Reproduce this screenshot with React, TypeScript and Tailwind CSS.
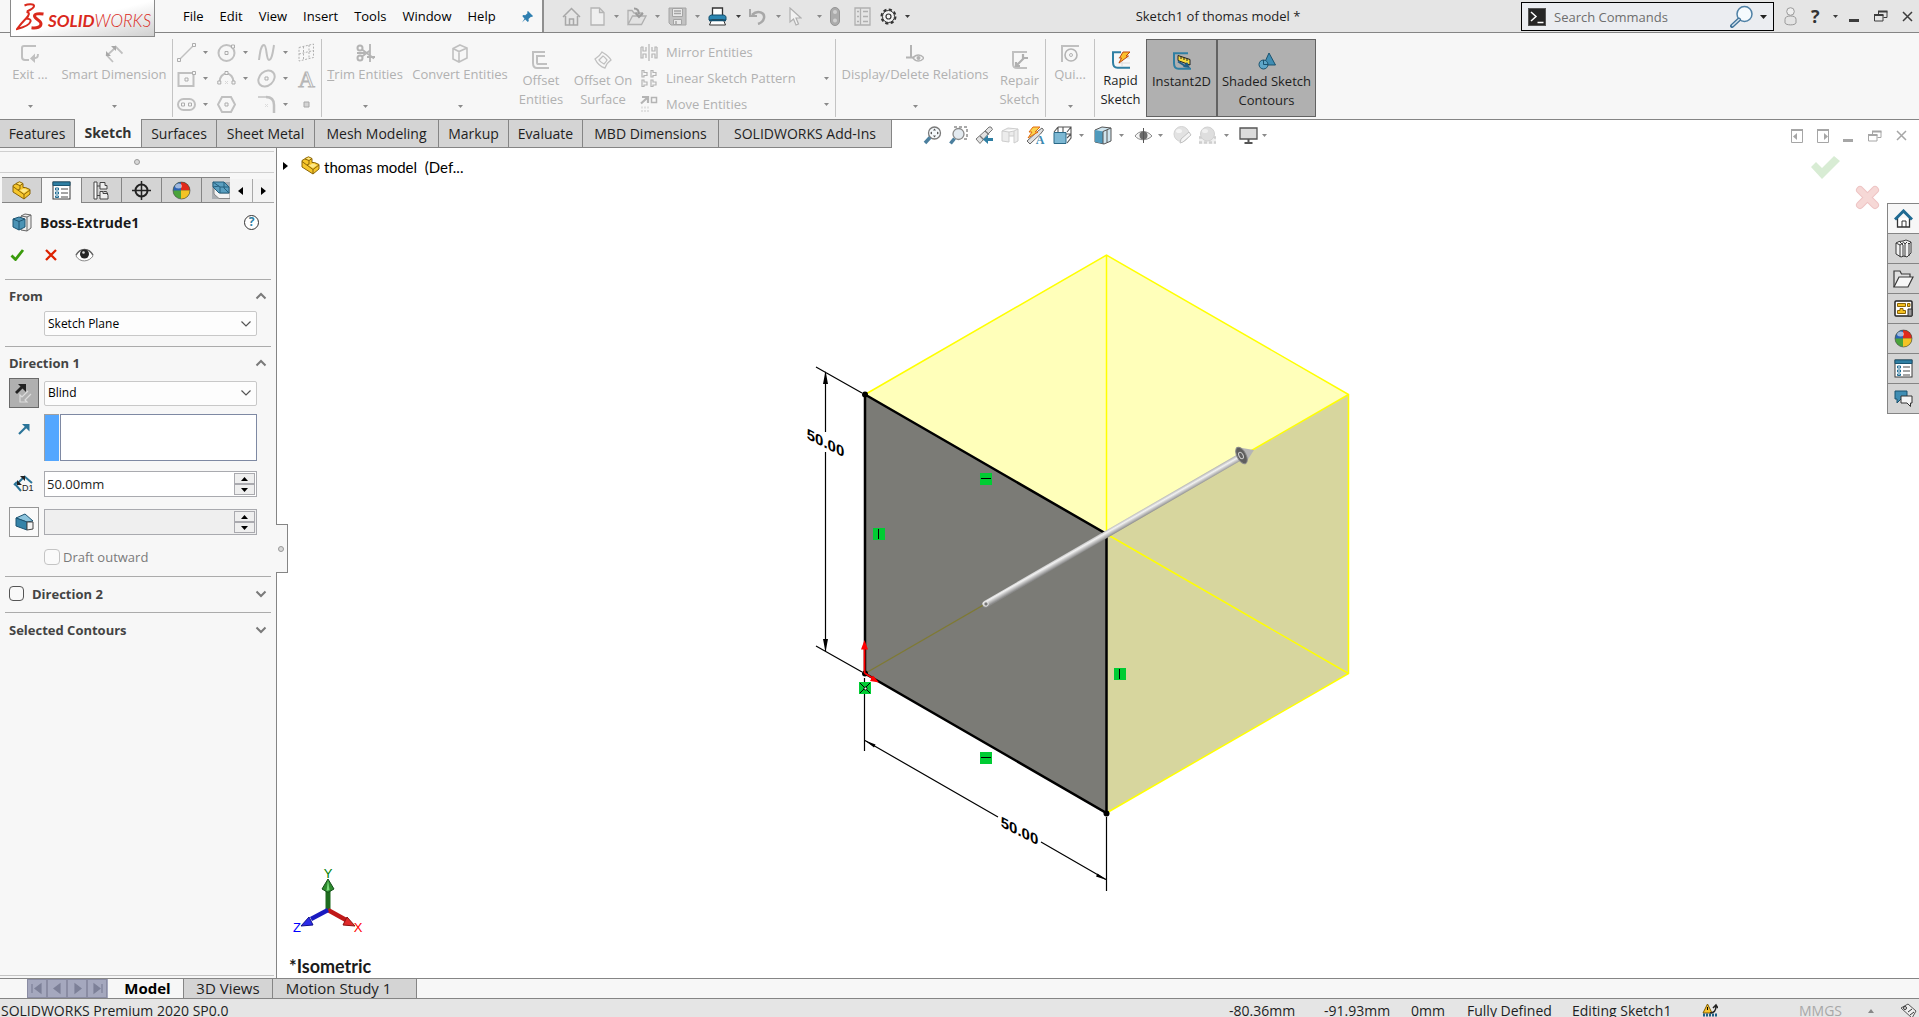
import { useState } from "react";
import type { ReactNode } from "react";

type IconProps = { w?: number; h?: number; className?: string; children: ReactNode };

const Svg = ({ w = 18, h = 18, className = "", children }: IconProps) => (
  <svg
    width={w}
    height={h}
    viewBox={`0 0 ${w} ${h}`}
    fill="none"
    className={`shrink-0 ${className}`}
    aria-hidden="true"
  >
    {children}
  </svg>
);

const Caret = ({ className = "text-[#8a8a8a]" }: { className?: string }) => (
  <Svg w={5} h={3} className={className}>
    <path d="M0 0h5L2.500 3z" fill="currentColor" />
  </Svg>
);

const Chevron = ({ up = false }: { up?: boolean }) => (
  <Svg w={12} h={8}>
    <path
      d={up ? "M1.500 6.500 6 2l4.500 4.500" : "M1.500 1.500 6 6l4.500-4.500"}
      stroke="#7a7a7a"
      strokeWidth="2"
    />
  </Svg>
);

/* ---------- Shared icons ---------- */

const PartIcon = () => (
  <Svg w={19} h={19}>
    <path
      d="M1 4.500 4 2.800V2.500L7.500.8 11 2.500v4l2.500 0 4.500 2v4.500L12 18 1 11z"
      fill="#f6c62b"
      stroke="#8a6508"
    />
    <path d="M1 5.500 12 13.500V18M12 13.500l6-4.500M4 3l4 1.500V8l-2 1M8 4.500l3-2" stroke="#8a6508" />
    <path d="m5 2.500 2.500-1L10 2.500 8 3.800zM8 9.500l3.500-2 4.500 1.500-4 3z" fill="#fde88a" />
  </Svg>
);

const PropertyIcon = () => (
  <Svg w={19} h={19}>
    <rect x="1" y="1" width="17" height="17" fill="#fff" stroke="#3a3a3a" />
    <path d="M1 1h17v3.500H1z" fill="#2f7fa3" stroke="#1c5672" />
    <path d="M3.500 7h3v2h-3zM3.500 11h3v2h-3zM3.500 15h3v1.500h-3z" fill="#fff" stroke="#1f6d94" />
    <path d="M9 8h7M9 12h7M9 16h7" stroke="#4a4a4a" />
  </Svg>
);

const AppearanceBall = () => (
  <Svg w={19} h={19}>
    <circle cx="9.500" cy="9.500" r="8.500" fill="#4aa33a" />
    <path d="M9 9.500V1a8.500 8.500 0 0 1 9 8.500z" fill="#e0291b" />
    <path d="M9 9.500V1a8.500 8.500 0 0 0-8 8.500z" fill="#2c63b5" />
    <path d="M9 9.500h9a8.500 8.500 0 0 1-9 8.500z" fill="#f4c324" />
    <ellipse cx="6.500" cy="5" rx="3.500" ry="2.500" fill="#fff" opacity=".55" />
    <circle cx="9.500" cy="9.500" r="8.500" stroke="#444" strokeOpacity=".6" />
  </Svg>
);

const RestoreIcon = ({ className = "text-[#3c3c3c]" }: { className?: string }) => (
  <Svg w={14} h={12} className={className}>
    <path d="M4.500 4V1.500h8.500v6H9.500M.500 5h8.500v6H.500z" stroke="currentColor" />
    <path d="M4 1.500h9.500M0 5h9.500" stroke="currentColor" strokeWidth="2" />
  </Svg>
);

const CloseIcon = ({ className = "text-[#3c3c3c]" }: { className?: string }) => (
  <Svg w={11} h={11} className={className}>
    <path d="m1 1 9 9M10 1l-9 9" stroke="currentColor" strokeWidth="1.500" />
  </Svg>
);

const MinimizeIcon = ({ className = "text-[#3c3c3c]" }: { className?: string }) => (
  <Svg w={11} h={12} className={className}>
    <path d="M0 9h10v3H0z" fill="currentColor" />
  </Svg>
);

/* ---------- Title bar ---------- */

const menus = ["File", "Edit", "View", "Insert", "Tools", "Window", "Help"];

const Logo = () => (
  <div className="z-10 ml-[10px] flex h-[37px] w-[145px] shrink-0 items-center self-start border border-t-0 border-[#8a8a8a] bg-linear-to-br from-white via-white to-[#d0d0d0] pb-[3px] pl-[5px] text-[#da291c]">
    <Svg w={28} h={28}>
      <path
        d="M8.500 2.500c3-1.200 9-2 9.500.2.500 2-3.500 4.200-7 5.800M10.500 9c3.500.5 3 3-.5 6.500C7 18.500 4 22 1 26c6-1.500 12.500-4 13.500-7.500.6-2-1.500-3-4.500-3"
        stroke="currentColor"
        strokeWidth="2"
      />
      <path
        d="M27.500 11c-5-.8-9-.2-9 2 0 2.800 6.500 4.300 6.500 7.800 0 3.200-4 4.700-9.500 4"
        stroke="currentColor"
        strokeWidth="3"
      />
    </Svg>
    <span className="mt-2 ml-[4px] text-[17px] leading-5 italic [font-family:Lato,sans-serif]">
      <b className="font-bold">SOLID</b>
      <span className="font-light">WORKS</span>
    </span>
  </div>
);

const quickTools: { label: string; cell: string; caret?: string; icon: ReactNode }[] = [
  {
    label: "Home",
    cell: "w-[28px]",
    icon: (
      <Svg w={19} h={19}>
        <path d="M3.500 9v9h12V9M1 10l8.500-8.500L18 10M7.500 18v-6h4v6" stroke="#a8a8a8" strokeWidth="1.500" />
      </Svg>
    ),
  },
  {
    label: "New",
    cell: "w-[37px]",
    caret: "text-[#8a8a8a]",
    icon: (
      <Svg w={15} h={19}>
        <path d="M1 1h8.500L14 5.500V18H1zM9.500 1v4.500H14" fill="#efefef" stroke="#b4b4b4" strokeWidth="1.300" />
      </Svg>
    ),
  },
  {
    label: "Open",
    cell: "w-[41px]",
    caret: "text-[#8a8a8a]",
    icon: (
      <Svg w={20} h={19}>
        <path d="M1 17V3.500h4L7 6h8v3M1 17.500 5.500 9H19l-4.500 8.500z" fill="#e2e2e2" stroke="#b0b0b0" strokeWidth="1.300" />
        <path d="M7 1.500c3 0 5 2 5 6M8.500 6l3.500 4 4-4" stroke="#9c9c9c" strokeWidth="2" />
      </Svg>
    ),
  },
  {
    label: "Save",
    cell: "w-[40px]",
    caret: "text-[#8a8a8a]",
    icon: (
      <Svg w={19} h={19}>
        <path d="M1 1h17v17H3l-2-2z" fill="#c2c2c2" stroke="#a4a4a4" />
        <path d="M4.500 1.500h10v8h-10zM5.500 12.500h8v5h-8z" fill="#e8e8e8" stroke="#a4a4a4" />
        <path d="M6 4h7M6 6.500h7M8 14v3" stroke="#a4a4a4" strokeWidth="1.500" />
      </Svg>
    ),
  },
  {
    label: "Print",
    cell: "w-[41px]",
    caret: "text-[#3c3c3c]",
    icon: (
      <Svg w={19} h={19}>
        <path d="M4.500 9V1h10v8" fill="#fff" stroke="#333" strokeWidth="1.300" />
        <path d="M1 13V9.500L3 8h13l2 1.500V13z" fill="#2b86b2" stroke="#14506e" />
        <path d="M3.500 13h12l2 5h-16z" fill="#fff" stroke="#333" />
        <path d="M1 13.500h17" stroke="#14506e" strokeWidth="1.500" />
      </Svg>
    ),
  },
  {
    label: "Undo",
    cell: "w-[40px]",
    caret: "text-[#8a8a8a]",
    icon: (
      <Svg w={17} h={17}>
        <path d="M1 1v7h7" stroke="#a8a8a8" strokeWidth="2" />
        <path d="M3 7c6-6 13-2 12 3-.5 3-3 5-6 6" stroke="#a8a8a8" strokeWidth="2.500" />
      </Svg>
    ),
  },
  {
    label: "Select",
    cell: "w-[41px]",
    caret: "text-[#8a8a8a]",
    icon: (
      <Svg w={13} h={19}>
        <path d="M1 1v14l3.500-3 2.500 6 2.500-1L7 11h5z" fill="#f2f2f2" stroke="#b0b0b0" strokeWidth="1.200" />
      </Svg>
    ),
  },
  {
    label: "Rebuild",
    cell: "w-[24px]",
    icon: (
      <Svg w={10} h={19}>
        <rect x=".5" y=".5" width="9" height="18" rx="4.500" fill="#ababab" stroke="#959595" />
        <circle cx="5" cy="5" r="2" fill="#d0d0d0" />
        <circle cx="5" cy="13.500" r="2" fill="#d0d0d0" />
      </Svg>
    ),
  },
  {
    label: "File Properties",
    cell: "w-[26px]",
    icon: (
      <Svg w={17} h={19}>
        <path d="M1 1h15v17H1zM6.500 1v17M3 4.500h2M3 9.500h2M3 14.500h2M9 4.500h5M9 9.500h5M9 14.500h5" stroke="#b0b0b0" strokeWidth="1.300" />
      </Svg>
    ),
  },
  {
    label: "Options",
    cell: "w-[38px]",
    caret: "text-[#3c3c3c]",
    icon: (
      <Svg w={17} h={17}>
        <circle cx="8.500" cy="8.500" r="7" stroke="#333" strokeWidth="2" strokeDasharray="3.200 2.300" />
        <circle cx="8.500" cy="8.500" r="6" fill="#f2f2f2" stroke="#333" />
        <circle cx="8.500" cy="8.500" r="2.500" stroke="#333" strokeWidth="1.200" />
      </Svg>
    ),
  },
];

const TitleBar = () => (
  <header className="flex h-[33px] shrink-0 border-b border-[#858585] bg-[#e5e5e5]">
    <div className="flex h-8 w-[544px] shrink-0 items-center border-r-2 border-[#8f8f8f] bg-[#f7f7f7]">
      <Logo />
      <nav className="ml-[28px] flex gap-4">
        {menus.map((menu) => (
          <button key={menu} className="text-[13px] leading-6 text-black">
            {menu}
          </button>
        ))}
      </nav>
      <button aria-label="Pin menu" className="mr-2 ml-auto">
        <Svg w={13} h={13}>
          <path d="m7 1 5 5-1 1-1-.3L7.500 9l.3 2-1 1-2.600-2.600L1 12.500 3.500 8.700 1.300 6l1-1 2 .3L6.700 3 6 2z" fill="#2f7fb0" />
        </Svg>
      </button>
    </div>

    <div className="ml-[18px] flex h-8 items-center">
      {quickTools.map((tool) => (
        <button
          key={tool.label}
          aria-label={tool.label}
          className={`flex shrink-0 items-center justify-between pt-px pr-[8px] ${tool.cell}`}
        >
          {tool.icon}
          {tool.caret && <Caret className={tool.caret} />}
        </button>
      ))}
    </div>

    <h1 className="flex-1 pr-[3px] text-center text-[13px] leading-8 text-[#1e1e1e]">
      Sketch1 of thomas model *
    </h1>

    <div className="mt-[2px] flex h-[29px] w-[253px] shrink-0 items-center border border-black bg-[#ebedf1] pr-[6px] pl-[6px]">
      <Svg w={18} h={18}>
        <rect x=".5" y=".5" width="17" height="17" fill="#262626" stroke="#555" />
        <path d="m3 4 5 4.500L3 13M9.500 14.500h6" stroke="#fff" strokeWidth="1.500" />
      </Svg>
      <input
        aria-label="Search Commands"
        placeholder="Search Commands"
        className="ml-2 w-full min-w-0 bg-transparent text-[13px] leading-5 outline-none placeholder:text-[#6e6e6e]"
      />
      <button aria-label="Run search" className="flex items-center gap-[6px]">
        <Svg w={24} h={23}>
          <circle cx="14.500" cy="9" r="7.500" fill="#f5fafd" stroke="#4f81a6" strokeWidth="1.500" />
          <path d="m9 14.500-7 6.500" stroke="#3f729a" strokeWidth="4" strokeLinecap="round" />
          <path d="m9 14.500-6.500 6" stroke="#cfe0ec" strokeWidth="1.500" strokeLinecap="round" />
        </Svg>
        <Svg w={7} h={4}>
          <path d="M0 0h7L3.500 4z" fill="#222" />
        </Svg>
      </button>
    </div>

    <div className="flex h-8 w-[145px] shrink-0 items-center pr-[6px] pl-[10px]">
      <button aria-label="Login">
        <Svg w={13} h={19}>
          <circle cx="6.500" cy="4.500" r="3.800" fill="#eee" stroke="#999" />
          <path d="M1 16v-3.500C1 10 3 9 6.500 9s5.500 1 5.500 3.500V16c-1 2.500-10 2.500-11 0z" fill="#e4e4e4" stroke="#999" />
        </Svg>
      </button>
      <button className="ml-[14px] flex items-center gap-[13px] text-[18px] leading-6 font-bold text-[#333]">
        ?
        <Caret className="text-[#3c3c3c]" />
      </button>
      <div className="ml-auto flex items-center gap-[14px]">
        <button aria-label="Minimize"><MinimizeIcon /></button>
        <button aria-label="Restore"><RestoreIcon /></button>
        <button aria-label="Close"><CloseIcon /></button>
      </div>
    </div>
  </header>
);

/* ---------- Ribbon ---------- */

const Divider = () => <div className="mt-[6px] h-[78px] w-px shrink-0 bg-[#c4c4c4]" />;

type RibbonButtonProps = {
  cell: string;
  icon: ReactNode;
  children: ReactNode;
  tall?: boolean;
  state?: "off" | "on" | "pressed";
};

const RibbonButton = ({ cell, icon, children, tall = false, state = "off" }: RibbonButtonProps) => (
  <button
    className={`mt-[6px] flex h-[78px] shrink-0 flex-col items-center text-[13px] leading-[19px] ${cell} ${
      state === "off" ? "text-[#b1b1b1]" : "text-[#1e1e1e]"
    } ${state === "pressed" ? "border border-[#626262] bg-[#b0b0b0]" : ""} ${
      tall ? "pt-[12px]" : "pt-[5px]"
    }`}
  >
    {icon}
    <span className="mt-[2px] whitespace-nowrap">{children}</span>
    {!tall && <Caret className="mt-[21px] text-[#8a8a8a]" />}
  </button>
);

const G = "#c0c0c0";

const sketchTools: { label: string; caret: boolean; icon: ReactNode }[] = [
  {
    label: "Line",
    caret: true,
    icon: (
      <>
        <path d="M3 16 16 3" stroke={G} strokeWidth="1.500" />
        <path d="M.5 15.500h3v3h-3zM15.500.5h3v3h-3z" stroke="#adadad" />
      </>
    ),
  },
  {
    label: "Circle",
    caret: true,
    icon: (
      <>
        <circle cx="9.500" cy="10" r="8" stroke={G} strokeWidth="2" />
        <path d="M8 8.500h3v3H8zM14.500 2h3v3h-3z" fill="#f7f7f7" stroke="#adadad" />
      </>
    ),
  },
  {
    label: "Spline",
    caret: true,
    icon: <path d="M2 17C3 9 4 2 7 2s2 15 5 15 4-9 5-15" stroke={G} strokeWidth="2" />,
  },
  {
    label: "Plane",
    caret: false,
    icon: (
      <path d="M2 4.500 16.500 1v13.500L2 18zM2 11l14.500-3.500M6.500 3.500v13M12 2v13.500" stroke="#b0b0b0" strokeDasharray="2 1.500" />
    ),
  },
  {
    label: "Corner Rectangle",
    caret: true,
    icon: (
      <>
        <path d="M1.500 4h15v13h-15z" stroke={G} strokeWidth="2" />
        <path d="M8 9h3v3H8zM15.500 2.500h3v3h-3z" fill="#f7f7f7" stroke="#adadad" />
      </>
    ),
  },
  {
    label: "Arc",
    caret: true,
    icon: (
      <>
        <path d="M2.500 13a7 8.500 0 0 1 14 0" stroke={G} strokeWidth="2" />
        <path d="M.8 12h3v3h-3zM15 12h3v3h-3zM8 2.500h3v3H8z" fill="#f7f7f7" stroke="#adadad" />
        <path d="m8 12 3 3M11 12l-3 3" stroke="#d8d8d8" />
      </>
    ),
  },
  {
    label: "Ellipse",
    caret: true,
    icon: (
      <>
        <ellipse cx="9.500" cy="9.500" rx="9" ry="7" transform="rotate(-42 9.500 9.500)" stroke={G} strokeWidth="2" />
        <path d="M8 8h3v3H8z" stroke="#adadad" />
      </>
    ),
  },
  {
    label: "Text",
    caret: false,
    icon: (
      <text
        x="9.500"
        y="18"
        fontSize="23"
        fontFamily="Liberation Serif, serif"
        textAnchor="middle"
        fill="#f7f7f7"
        stroke="#b4b4b4"
      >
        A
      </text>
    ),
  },
  {
    label: "Slot",
    caret: true,
    icon: (
      <>
        <rect x="1" y="4" width="17" height="11" rx="5.500" stroke={G} strokeWidth="2" />
        <path d="M4.500 8h3v3h-3zM11.500 8h3v3h-3z" stroke="#adadad" />
      </>
    ),
  },
  {
    label: "Polygon",
    caret: false,
    icon: (
      <>
        <path d="M5 2h9l4 7.500-4 7.500H5L1 9.500z" stroke={G} strokeWidth="2" />
        <path d="M8 8h3v3H8z" stroke="#adadad" />
      </>
    ),
  },
  {
    label: "Fillet",
    caret: true,
    icon: (
      <>
        <path d="M1 2h8" stroke="#cfcfcf" strokeWidth="2" />
        <path d="M9 2c6 0 8 3 8 8v8" stroke={G} strokeWidth="2.500" />
        <path d="m8 9 3 3M11 9l-3 3" stroke="#dcdcdc" />
      </>
    ),
  },
  {
    label: "Point",
    caret: false,
    icon: <path d="M7 7h5v5H7z" fill="#d4d4d4" stroke="#a8a8a8" />,
  },
];

const listTools = [
  {
    label: "Mirror Entities",
    caret: false,
    icon: <path d="M9 1v17M1 4h2v4h3V4M1 4v11h2v-4h3v4M17 4h-2v4h-3V4M17 4v11h-2v-4h-3v4" stroke="#b4b4b4" strokeWidth="1.200" />,
  },
  {
    label: "Linear Sketch Pattern",
    caret: true,
    icon: (
      <path
        d="M2 1.500h2v2h3v3H4v1.500H2zM11 1.500h2v2h3v3h-3v1.500h-2zM2 11h2v2h3v3H4v1.500H2zM11 11h2v2h3v3h-3v1.500h-2z"
        stroke="#b4b4b4"
        strokeWidth="1.200"
      />
    ),
  },
  {
    label: "Move Entities",
    caret: true,
    icon: (
      <>
        <path d="M1 8.500 7 3M2 2h6v6" stroke="#b4b4b4" strokeWidth="2.200" />
        <path d="M11.500 2.500h5v5h-5z" stroke="#b4b4b4" strokeWidth="1.500" />
        <path d="M1 12.500h8M1 16h8" stroke="#e0e0e0" strokeWidth="2" strokeDasharray="2 1" />
      </>
    ),
  },
];

const Ribbon = () => (
  <section aria-label="Sketch tools" className="flex h-[87px] shrink-0 border-b border-[#858585] bg-[#f7f7f7]">
    <RibbonButton
      cell="w-[60px]"
      icon={
        <Svg w={18} h={19}>
          <path d="M15 2H3C2 2 1 2 1 4v9c0 2 1 3 3 3h4M11 14.500c5 0 6-1 6-4.500" stroke={G} strokeWidth="2" />
          <path d="m14 9.500-5 5 5 4.500z" fill={G} />
        </Svg>
      }
    >
      Exit ...
    </RibbonButton>
    <RibbonButton
      cell="w-[108px]"
      icon={
        <Svg w={18} h={19}>
          <path d="M1 10.500 8 18M10 2l7.500 7.500M2 11.500 11 3" stroke={G} strokeWidth="1.800" />
          <path d="M1 7v5h5zM6 2h5v5z" fill="#a8a8a8" />
        </Svg>
      }
    >
      Smart Dimension
    </RibbonButton>
    <div className="w-1 shrink-0" />
    <Divider />

    <div className="mt-[6px] grid h-[78px] w-[148px] shrink-0 grid-cols-[40px_40px_40px_20px] grid-rows-3 pl-1">
      {sketchTools.map((tool) => (
        <button key={tool.label} aria-label={tool.label} className="flex items-center gap-[7px]">
          <Svg w={19} h={19}>{tool.icon}</Svg>
          {tool.caret && <Caret />}
        </button>
      ))}
    </div>
    <Divider />

    <RibbonButton
      cell="w-[86px]"
      icon={
        <Svg w={19} h={19}>
          <circle cx="4" cy="4" r="2.500" stroke="#b4b4b4" strokeWidth="2" />
          <circle cx="4" cy="14" r="2.500" stroke="#b4b4b4" strokeWidth="2" />
          <path d="m6 5.500 12 9M6 12.500l8-6M14 0v18M1 9h8M11 13h8" stroke="#b4b4b4" strokeWidth="1.800" />
        </Svg>
      }
    >
      <span className="underline">T</span>rim Entities
    </RibbonButton>
    <RibbonButton
      cell="w-[104px]"
      icon={
        <Svg w={18} h={19}>
          <path d="m9 1 7 3v10l-8 4-6-3V4.500zM2 4.500l6 3 8-3.500M8 7.500V18" stroke={G} strokeWidth="1.600" />
        </Svg>
      }
    >
      Convert Entities
    </RibbonButton>
    <RibbonButton
      tall
      cell="w-[58px]"
      icon={
        <Svg w={18} h={18}>
          <path d="M13 1H1v11c0 3 1 5 4 5h12" stroke={G} strokeWidth="2" />
          <path d="M13 5H5v6c0 2 0 2 2 2h8" stroke={G} strokeWidth="2" />
        </Svg>
      }
    >
      Offset
      <br />
      Entities
    </RibbonButton>
    <RibbonButton
      tall
      cell="w-[66px]"
      icon={
        <Svg w={18} h={18}>
          <path d="M1 8C4 6 7 3 8 1c3 2 7 4 9 8-3 2-5 5-6 8-4-1-8-5-10-9z" stroke={G} strokeWidth="1.300" />
          <path d="M5 9c2-2 3-3 4-4 2 1 3 3 4 4-1 2-2 3-3 4-2-1-4-2-5-4z" stroke={G} strokeWidth="1.300" />
        </Svg>
      }
    >
      Offset On
      <br />
      Surface
    </RibbonButton>

    <div className="mt-[6px] grid h-[78px] w-[199px] shrink-0 grid-rows-3 pr-[6px] pl-[4px]">
      {listTools.map((tool) => (
        <button key={tool.label} className="flex items-center text-[13px] leading-5 text-[#b1b1b1]">
          <Svg w={18} h={19}>{tool.icon}</Svg>
          <span className="ml-2">{tool.label}</span>
          {tool.caret && (
            <span className="ml-auto">
              <Caret />
            </span>
          )}
        </button>
      ))}
    </div>
    <Divider />

    <RibbonButton
      cell="w-[158px]"
      icon={
        <Svg w={18} h={19}>
          <path d="M5 1v12M0 13.500h9" stroke="#b4b4b4" strokeWidth="2" />
          <path d="M7 14c3-4 8-4 11 0-3 4-8 4-11 0z" fill="#f7f7f7" stroke="#b4b4b4" strokeWidth="1.300" />
          <circle cx="12.500" cy="14" r="2" fill="#b4b4b4" />
        </Svg>
      }
    >
      Display/Delete Relations
    </RibbonButton>
    <RibbonButton
      tall
      cell="w-[51px]"
      icon={
        <Svg w={18} h={18}>
          <path d="M16 1H2v12c0 2 1 4 4 4h10" stroke={G} strokeWidth="2" />
          <path d="m6 14 7-7M12 3v4h5M5 11v4h4" stroke="#b0b0b0" strokeWidth="2.200" />
        </Svg>
      }
    >
      Repair
      <br />
      Sketch
    </RibbonButton>
    <Divider />
    <RibbonButton
      cell="w-[48px]"
      icon={
        <Svg w={18} h={19}>
          <path d="M1 18V2h17" stroke={G} strokeWidth="2" />
          <circle cx="10" cy="11" r="6" stroke="#b4b4b4" strokeWidth="1.600" />
          <circle cx="10" cy="11" r="1.500" stroke="#b4b4b4" />
        </Svg>
      }
    >
      Qui...
    </RibbonButton>
    <Divider />

    <RibbonButton
      tall
      state="on"
      cell="w-[51px]"
      icon={
        <Svg w={18} h={18}>
          <path d="M6 7h12M6 12h12M10 3v12" stroke="#dcdcdc" />
          <path d="M9 1.200H1v10c0 3 1.500 5.500 4.500 5.500H18" stroke="#2f7fa3" strokeWidth="2" />
          <path d="M11 1h7l-4 4h2.500L7 12l2.500-5H7.500z" fill="#fbc02d" stroke="#c0490f" />
        </Svg>
      }
    >
      Rapid
      <br />
      Sketch
    </RibbonButton>
    <RibbonButton
      tall
      state="pressed"
      cell="w-[71px]"
      icon={
        <Svg w={18} h={18}>
          <path d="M15 1.200H1v10c0 3 1.500 5.500 4.500 5.500H18" stroke="#2f7fa3" strokeWidth="2" />
          <path d="m5 3.500 12 4v5.500L5 8.500z" fill="#f9dc3c" stroke="#222" />
          <path d="M8 4.500v2.500M11 5.500V8M14 6.500V9" stroke="#222" />
          <path d="m5 9.500 8 5" stroke="#1f5f86" strokeWidth="2" />
          <path d="m10 15 7 1-3-6z" fill="#1f5f86" />
        </Svg>
      }
    >
      Instant2D
    </RibbonButton>
    <RibbonButton
      tall
      state="pressed"
      cell="w-[99px]"
      icon={
        <Svg w={18} h={18}>
          <path d="m11 1 6.500 12H5.500z" fill="#3f8db3" stroke="#1b536f" />
          <circle cx="5.500" cy="12.500" r="4.500" fill="#5ea6c8" stroke="#1b536f" />
          <path d="M5.500 12.500h4.500M5.500 12.500V8" stroke="#1b536f" />
        </Svg>
      }
    >
      Shaded Sketch
      <br />
      Contours
    </RibbonButton>
  </section>
);

/* ---------- Command tabs and view toolbar ---------- */

const commandTabs = [
  { label: "Features", cell: "w-[75px]" },
  { label: "Sketch", cell: "w-[67px]" },
  { label: "Surfaces", cell: "w-[75px]" },
  { label: "Sheet Metal", cell: "w-[98px]" },
  { label: "Mesh Modeling", cell: "w-[124px]" },
  { label: "Markup", cell: "w-[70px]" },
  { label: "Evaluate", cell: "w-[74px]" },
  { label: "MBD Dimensions", cell: "w-[136px]" },
  { label: "SOLIDWORKS Add-Ins", cell: "w-[173px]" },
];

const viewTools: { label: string; cell: string; caret?: boolean; icon: ReactNode }[] = [
  {
    label: "Zoom to Fit",
    cell: "w-[26px]",
    icon: (
      <>
        <circle cx="11.500" cy="7" r="6" fill="#f4f8fb" stroke="#7a7a7a" strokeWidth="1.300" />
        <path d="M11.500 2.500 13 4.500h-3zM11.500 11.500l1.500-2h-3zM7 7l2-1.500v3zM16 7l-2-1.500v3z" fill="#555" />
        <path d="m7 11.500-5 5.500" stroke="#4b7f9e" strokeWidth="3.500" />
      </>
    ),
  },
  {
    label: "Zoom to Area",
    cell: "w-[26px]",
    icon: (
      <>
        <path d="M5 1h13v12h-4" stroke="#555" strokeDasharray="3 2" />
        <circle cx="9.500" cy="8" r="5.500" fill="#e3eaf0" stroke="#8a8a8a" strokeWidth="1.300" />
        <path d="m5.500 12.500-4 5" stroke="#4b7f9e" strokeWidth="3.500" />
      </>
    ),
  },
  {
    label: "Previous View",
    cell: "w-[26px]",
    icon: (
      <>
        <path d="m1 13 9-8 4-4h2l1.500 2.500L14 7l-9 10.500z" fill="#e2e2e2" stroke="#777" />
        <path d="m5 10 4 4M10 5l4 3.500" stroke="#777" strokeWidth="1.300" />
        <path d="M18 13.500h-6" stroke="#2f7fa3" strokeWidth="3" />
        <path d="m13 9-5 4.500 5 4.500z" fill="#2f7fa3" />
      </>
    ),
  },
  {
    label: "Section View",
    cell: "w-[25px]",
    icon: <path d="m1 5 6-3 10 1v12l-4 2v-7H8v6l-7-1zM1 5l7 1 5-1 4-2M8 6v4M13 5v5" fill="#ececec" stroke="#cdcdcd" />,
  },
  {
    label: "Dynamic Annotation Views",
    cell: "w-[27px]",
    icon: (
      <>
        <path d="M1 15 12 5l4-3 1.500 2-3 4L4 18z" fill="#e0e0e0" stroke="#666" />
        <path d="M7 1h7L9 6h3L2 12l4-6H3z" fill="#fcd34d" stroke="#e06c10" />
        <text x="14" y="18" fontSize="12" fontFamily="Liberation Serif, serif" fontWeight="bold" textAnchor="middle" fill="#3b88b0">
          A
        </text>
      </>
    ),
  },
  {
    label: "View Orientation",
    cell: "w-[41px]",
    caret: true,
    icon: (
      <>
        <path d="M5 1h13v11l-4 5M5 1v12M1 6l4-5M14 6l4-5M10 1v12M5 8h13M14 12l4-4" stroke="#555" strokeWidth="1.100" />
        <path d="M1 6.500h12v11H1z" fill="#7db8d3" stroke="#2a6987" />
      </>
    ),
  },
  {
    label: "Display Style",
    cell: "w-[40px]",
    caret: true,
    icon: (
      <>
        <path d="m1 4 7-3 9 1v13l-7 3-9-2z" fill="#cfe5ef" stroke="#555" />
        <path d="m1 4 8 1.500v12L1 16z" fill="#4f9abd" />
        <path d="m9 5.500 8-3.500M9 5.500V18M13 4v12.500" stroke="#555" />
      </>
    ),
  },
  {
    label: "Hide/Show Items",
    cell: "w-[39px]",
    caret: true,
    icon: (
      <>
        <path d="M1 10c4-6 12-6 17 0-5 5-13 5-17 0z" fill="#f4f4f4" stroke="#8a8a8a" />
        <circle cx="9.500" cy="9.500" r="4" fill="#6b6b6b" />
        <path d="M9.500 2v15" stroke="#555" />
      </>
    ),
  },
  {
    label: "Edit Appearance",
    cell: "w-[25px]",
    icon: (
      <>
        <circle cx="8.500" cy="8" r="7.500" fill="#e2e2e2" stroke="#d2d2d2" />
        <ellipse cx="6" cy="5" rx="3" ry="2" fill="#f4f4f4" />
        <path d="m7 17 1-4 8-7 2 3-8 7z" fill="#f4f4f4" stroke="#c2c2c2" />
      </>
    ),
  },
  {
    label: "Apply Scene",
    cell: "w-[41px]",
    caret: true,
    icon: (
      <>
        <path d="M1 10h17v8H1z" fill="#f0f0f0" />
        <path d="M1 11.500h17M1 16.500h17" stroke="#cfcfcf" strokeWidth="2.500" strokeDasharray="3 2" />
        <circle cx="9.500" cy="8" r="7" fill="#dedede" stroke="#d0d0d0" />
        <ellipse cx="7" cy="5" rx="3" ry="2" fill="#f0f0f0" />
      </>
    ),
  },
  {
    label: "View Settings",
    cell: "w-[38px]",
    caret: true,
    icon: (
      <>
        <path d="M1 2h17v11H1z" fill="#dcdcdc" stroke="#555" strokeWidth="1.300" />
        <path d="M9.500 13v3M5.500 17h8" stroke="#555" strokeWidth="2" />
      </>
    ),
  },
];

const CommandBar = () => (
  <div className="flex h-[28px] shrink-0 bg-white">
    <div role="tablist" className="flex shrink-0">
      {commandTabs.map((tab) =>
        tab.label === "Sketch" ? (
          <button
            key={tab.label}
            role="tab"
            aria-selected="true"
            className={`-mt-px border-r border-b border-[#858585] bg-[#f7f7f7] text-[14px] leading-6 font-bold text-[#333] ${tab.cell}`}
          >
            {tab.label}
          </button>
        ) : (
          <button
            key={tab.label}
            role="tab"
            aria-selected="false"
            className={`border-r border-b border-[#858585] bg-[#d4d4d4] text-[14px] leading-6 whitespace-nowrap text-[#1e1e1e] ${tab.cell}`}
          >
            {tab.label}
          </button>
        )
      )}
    </div>

    <div className="ml-[31px] flex items-center pt-[3px]">
      {viewTools.map((tool) => (
        <button
          key={tool.label}
          aria-label={tool.label}
          className={`flex shrink-0 items-center justify-between ${tool.caret ? "pr-[10px]" : ""} ${tool.cell}`}
        >
          <Svg w={19} h={19}>{tool.icon}</Svg>
          {tool.caret && <Caret />}
        </button>
      ))}
    </div>

    <div className="mr-[12px] ml-auto flex items-center gap-[14px] pt-[3px]">
      <button aria-label="Dock left">
        <Svg w={12} h={14}>
          <path d="M.5 1h11v12.500H.5z" stroke="#a6a6a6" />
          <path d="M0 1h12" stroke="#a6a6a6" strokeWidth="2" />
          <path d="M2 7.500 6 4v7z" fill="#a6a6a6" />
        </Svg>
      </button>
      <button aria-label="Dock right">
        <Svg w={12} h={14}>
          <path d="M.5 1h11v12.500H.5z" stroke="#a6a6a6" />
          <path d="M0 1h12" stroke="#a6a6a6" strokeWidth="2" />
          <path d="M11 7.500 7 4v7z" fill="#a6a6a6" />
        </Svg>
      </button>
      <button aria-label="Minimize document"><MinimizeIcon className="text-[#a6a6a6]" /></button>
      <button aria-label="Restore document"><RestoreIcon className="text-[#a6a6a6]" /></button>
      <button aria-label="Close document"><CloseIcon className="text-[#a6a6a6]" /></button>
    </div>
  </div>
);

/* ---------- Property manager ---------- */

const panelTabs = [
  { label: "FeatureManager", icon: <PartIcon /> },
  { label: "PropertyManager", icon: <PropertyIcon /> },
  {
    label: "ConfigurationManager",
    icon: (
      <Svg w={19} h={19}>
        <path d="M2 1h3v17H2z" fill="#fff" stroke="#444" />
        <path d="M8 1.500h5v3h2V8H8zM8 10.500h3v2h4l1 2V18H8z" fill="#eee" stroke="#444" />
        <path d="M5 5h3M5 14.500h3M11.500 10.500h3l1.500 3" stroke="#444" />
      </Svg>
    ),
  },
  {
    label: "DimXpertManager",
    icon: (
      <Svg w={19} h={19}>
        <circle cx="9.500" cy="9.500" r="6" stroke="#222" strokeWidth="2" />
        <path d="M9.500 0v19M0 9.500h19" stroke="#222" strokeWidth="1.500" />
      </Svg>
    ),
  },
  { label: "DisplayManager", icon: <AppearanceBall /> },
];

const SectionHeader = ({ children, up = false, cell }: { children: ReactNode; up?: boolean; cell: string }) => (
  <div className={`flex items-center justify-between pr-1 pl-1 text-[13px] leading-5 font-bold text-[#444] ${cell}`}>
    {children}
    <button aria-label={up ? "Collapse section" : "Expand section"}>
      <Chevron up={up} />
    </button>
  </div>
);

const DropDown = ({ label, value, options }: { label: string; value: string; options: string[] }) => (
  <div className="flex h-[25px] w-[213px] items-center rounded-xs border border-[#c8c8c8] bg-[#fdfdfd]">
    <select
      aria-label={label}
      defaultValue={value}
      className="h-full w-full appearance-none bg-transparent pl-[3px] text-[12px] leading-5 text-black outline-none"
    >
      {options.map((option) => (
        <option key={option}>{option}</option>
      ))}
    </select>
    <Svg w={10} h={6} className="pointer-events-none -ml-[15px]">
      <path d="m.5.5 4.500 4.500L9.500.5" stroke="#555" strokeWidth="1.200" />
    </Svg>
  </div>
);

const Spinner = ({ disabled = false }: { disabled?: boolean }) => (
  <div className="mr-px flex w-[21px] shrink-0 flex-col">
    {["Increase", "Decrease"].map((name) => (
      <button
        key={name}
        aria-label={name}
        disabled={disabled}
        className="flex h-[11px] items-center justify-center border border-[#aaaaaf] bg-[#efefef]"
      >
        <Svg w={7} h={4}>
          <path d={name === "Increase" ? "M0 4h7L3.500 0z" : "M0 0h7L3.500 4z"} fill="#000" />
        </Svg>
      </button>
    ))}
  </div>
);

const PropertyManager = () => {
  const [depth, setDepth] = useState("50.00mm");
  const [direction2, setDirection2] = useState(false);

  return (
    <aside className="flex w-[277px] shrink-0 flex-col border-r border-[#858585] bg-[#f7f7f7]">
      <div className="mt-[3px] mr-[2px] flex h-[22px] shrink-0 items-center justify-center border-y border-[#cfcfcf]">
        <Svg w={6} h={6}>
          <circle cx="3" cy="3" r="2.500" fill="#d8d8d8" stroke="#999" />
        </Svg>
      </div>

      {/* Manager tabs */}
      <div role="tablist" className="mt-1 mr-[2px] flex h-[26px] shrink-0 pl-[2px]">
        {panelTabs.map((tab) => (
          <button
            key={tab.label}
            role="tab"
            aria-label={tab.label}
            aria-selected={tab.label === "PropertyManager"}
            className={`flex w-10 items-center justify-center border-t border-r border-[#858585] ${
              tab.label === "PropertyManager" ? "bg-[#f7f7f7]" : "border-b bg-[#d4d4d4]"
            }`}
          >
            {tab.icon}
          </button>
        ))}
        <button
          role="tab"
          aria-label="CAM Manager"
          aria-selected="false"
          className="flex w-[28px] items-center border-y border-[#858585] bg-[#d4d4d4] pl-[10px]"
        >
          <Svg w={18} h={19}>
            <path d="M0 1h18v17H0z" fill="#a8adb2" />
            <path d="M2 7v6l5 4.500h11V12H8z" fill="#f3f3f3" stroke="#888" />
            <path d="M1 1h11l5 5v6H7L1 6z" fill="#5a9fc0" stroke="#24607f" />
            <path d="m1 1 7 5h9M8 6v6M12 1v6l5 5M1 6l6-1" stroke="#24607f" />
          </Svg>
        </button>
        <button aria-label="Scroll tabs left" className="mt-[2px] flex flex-1 items-center justify-center border-r border-b border-[#a8a8a8] bg-[#f3f3f3]">
          <Svg w={5} h={8}>
            <path d="M5 0v8L0 4z" fill="#000" />
          </Svg>
        </button>
        <button aria-label="Scroll tabs right" className="mt-[2px] flex flex-1 items-center justify-center border-b border-[#a8a8a8] bg-[#f3f3f3]">
          <Svg w={5} h={8}>
            <path d="M0 0v8l5-4z" fill="#000" />
          </Svg>
        </button>
      </div>

      {/* Feature title */}
      <div className="flex h-[38px] shrink-0 items-center pr-[17px] pl-3">
        <Svg w={20} h={19}>
          <path d="m9 3 4-2 6 1v13l-4 3-6-1z" fill="#ececec" stroke="#666" />
          <path d="M15 4v14M9 3l6 1 4-2" stroke="#666" />
          <path d="m1 6 6-2 6 2v8l-6 3-6-3z" fill="#4b93b5" stroke="#1d5472" />
          <path d="m1 6 6 2.500L13 6M7 8.500V17" stroke="#1d5472" />
        </Svg>
        <h2 className="ml-2 pt-px text-[14px] leading-5 font-bold text-[#1a1a1a]">Boss-Extrude1</h2>
        <button aria-label="Help" className="ml-auto flex size-[15px] items-center justify-center rounded-full border border-[#333] bg-white text-[12px] leading-3 font-bold text-[#2f7fa3]">
          ?
        </button>
      </div>
      <div className="flex h-7 shrink-0 items-center gap-[20px] pl-[10px]">
        <button aria-label="OK">
          <Svg w={15} h={12}>
            <path d="m1.500 6.500 4 4L13 1" stroke="#3a9b0c" strokeWidth="2.800" />
          </Svg>
        </button>
        <button aria-label="Cancel">
          <Svg w={12} h={12}>
            <path d="m1 1 10 10M11 1 1 11" stroke="#dd2200" strokeWidth="2.300" />
          </Svg>
        </button>
        <button aria-label="Detailed preview" className="-ml-[2px]">
          <Svg w={19} h={14}>
            <path d="M1 8c3-8 14-9 17 0-4 6-13 7-17 0z" fill="#fff" stroke="#8a8a8a" />
            <path d="M1 7C5-.5 14-.5 18 7" stroke="#666" strokeWidth="1.500" />
            <circle cx="9.500" cy="6" r="4.500" fill="#262626" />
            <circle cx="8.500" cy="4.500" r="1.300" fill="#ddd" />
          </Svg>
        </button>
      </div>

      <section className="mx-[5px] mt-[10px] border-t border-[#ababab] pb-[10px]">
        <SectionHeader up cell="h-[31px]">From</SectionHeader>
        <div className="pl-[39px]">
          <DropDown label="Start condition" value="Sketch Plane" options={["Sketch Plane", "Surface/Face/Plane", "Vertex", "Offset"]} />
        </div>
      </section>

      <section className="mx-[5px] border-t border-[#ababab] pb-[11px]">
        <SectionHeader up cell="h-[31px]">Direction 1</SectionHeader>
        <div className="flex items-center gap-[5px] pl-1">
          <button aria-label="Reverse direction" className="flex size-[30px] items-center justify-center border border-[#6a6a6a] bg-[#b0b0b0]">
            <Svg w={20} h={22}>
              <path d="m2 11 6-6" stroke="#222" strokeWidth="2.800" />
              <path d="M4 2h8v8z" fill="#222" />
              <path d="m17 9-6 6 2 2H6v-7l2 2 6-6" stroke="#dcdcdc" strokeWidth="1.200" transform="translate(0 3)" />
            </Svg>
          </button>
          <DropDown label="End condition" value="Blind" options={["Blind", "Up To Vertex", "Up To Surface", "Mid Plane"]} />
        </div>
        <div className="mt-[6px] flex gap-[5px] pl-1">
          <div className="flex w-[30px] justify-center pt-[9px]">
            <Svg w={12} h={12}>
              <path d="m1 11 8-8" stroke="#2a7499" strokeWidth="2.200" />
              <path d="M4 1h7.500v7.500z" fill="#2a7499" />
            </Svg>
          </div>
          <div className="flex h-[47px] w-[213px]">
            <div className="w-[15px] shrink-0 border-t border-l border-[#a0a0a0] bg-[#54a7ff]" />
            <textarea
              aria-label="Direction of extrusion"
              className="ml-px w-full resize-none border border-[#7e89a3] bg-white outline-none"
            />
          </div>
        </div>
        <div className="mt-2 flex h-[30px] items-center gap-[5px] pl-1">
          <label htmlFor="depth" aria-label="Depth" className="flex w-[30px] justify-center">
            <Svg w={22} h={20}>
              <path d="m2 10 6 7M1 11l3-3M11 2l8 7M4 10l7-7" stroke="#2a7499" strokeWidth="2" />
              <path d="M4 6v5h5zM7 2h5v5z" fill="#222" />
              <text x="9" y="17" fontSize="9" fontFamily="Liberation Sans, sans-serif" fill="#222">D1</text>
            </Svg>
          </label>
          <div className="flex h-[26px] w-[213px] items-center border border-[#a9aaaf] bg-white">
            <input
              id="depth"
              value={depth}
              onChange={(e) => setDepth(e.target.value)}
              className="h-full w-full min-w-0 bg-transparent pl-[2px] text-[13px] leading-5 text-[#1e1e1e] outline-none"
            />
            <Spinner />
          </div>
        </div>
        <div className="mt-2 flex items-center gap-[5px] pl-1">
          <button aria-label="Draft on/off" className="flex size-[30px] items-center justify-center border border-[#969696] bg-[#fafafa]">
            <Svg w={19} h={18}>
              <path d="m1 5 9-4 8 7-6 1z" fill="#8cc4dd" stroke="#1d5472" />
              <path d="m1 5 11 4v8L1 13z" fill="#3583a8" stroke="#1d5472" />
              <path d="M12 9h6v7l-6 1z" fill="#f4f4f4" stroke="#444" />
            </Svg>
          </button>
          <div className="flex h-[26px] w-[213px] items-center border border-[#a9aaaf] bg-[#efefef]">
            <input aria-label="Draft angle" disabled className="h-full w-full min-w-0 bg-transparent pl-[2px] text-[13px]" />
            <Spinner disabled />
          </div>
        </div>
        <label className="mt-3 ml-[39px] flex h-4 items-center gap-[3px] text-[13px] leading-4 text-[#7a7a7a]">
          <input type="checkbox" disabled className="size-4 appearance-none rounded-sm border border-[#c4c4c4] bg-[#fafafa]" />
          Draft outward
        </label>
      </section>

      <section className="mx-[5px] border-t border-[#ababab] pb-[2px]">
        <SectionHeader cell="h-[33px]">
          <label className="flex items-center gap-2">
            <input
              type="checkbox"
              checked={direction2}
              onChange={(e) => setDirection2(e.target.checked)}
              className="size-[15px] appearance-none rounded-sm border border-[#555] bg-[#f9f9f9] checked:bg-[#2f7fa3]"
            />
            Direction 2
          </label>
        </SectionHeader>
      </section>
      <section className="mx-[5px] border-t border-[#ababab]">
        <SectionHeader cell="h-[33px]">Selected Contours</SectionHeader>
      </section>
      <div className="mt-auto mr-[2px] mb-px h-[2px] border-t border-[#c4c4c4]" />
    </aside>
  );
};

/* ---------- Graphics area ---------- */

const Relation = ({ x, y, kind }: { x: number; y: number; kind: "h" | "v" | "fixed" }) => (
  <g transform={`translate(${x} ${y})`}>
    <path d="M0 0h12v12H0z" fill="#00cc33" />
    {kind === "h" && <path d="M1 5.500h10" stroke="#000" />}
    {kind === "v" && <path d="M5.500 1v10" stroke="#000" />}
    {kind === "fixed" && (
      <>
        <path d="m1 1 10 10M11 1 1 11" stroke="#000" />
        <circle cx="6.500" cy="6.500" r="1.500" fill="#fff" stroke="#000" />
      </>
    )}
  </g>
);

const ModelPreview = () => (
  <svg viewBox="277 148 1642 830" className="absolute inset-0 h-full w-full" role="img" aria-label="Extrude preview">
    <defs>
      <linearGradient id="shaft" gradientUnits="userSpaceOnUse" x1="1110" y1="527" x2="1114" y2="534">
        <stop offset="0" stopColor="#a8a8a8" />
        <stop offset="0.400" stopColor="#f2f2f2" />
        <stop offset="1" stopColor="#8a8a8a" />
      </linearGradient>
    </defs>

    {/* Solid preview */}
    <path d="M865 394.500 1106.500 255l242 139.500L1106.500 534z" fill="#ffffba" />
    <path d="M1106.500 534 1348.500 394.500v279L1106.500 813z" fill="#d7d69e" />
    <path d="M865 394.500 1106.500 534v279L865 673.500z" fill="#7b7b76" />
    <path
      d="M865 394.500 1106.500 255l242 139.500v279L1106.500 813M1106.500 255v279l242 139.500M1106.500 534l242-139.500"
      fill="none"
      stroke="#ffff00"
      strokeWidth="1.500"
    />
    <path d="M865 673.500 1106.500 534" stroke="#7f7a33" strokeWidth="1.300" />
    <path d="M865 394.500 1106.500 534v279L865 673.500z" fill="none" stroke="#000" strokeWidth="2.500" />
    <circle cx="865" cy="394.500" r="3" />
    <circle cx="865" cy="673.500" r="3" />
    <circle cx="1106.500" cy="813.500" r="3" />

    {/* Dimensions */}
    <g stroke="#000" strokeWidth="1.200">
      <path d="m816 367 46 26M816 646l46 26M825.500 372v60M825.500 452v199" />
      <path d="M864.500 678v73M1106.500 817v74M865 740.500l133 76.500M1041 842l65 37.500" />
    </g>
    <path d="m825.500 371 2.500 13h-5zM825.500 652l2.500-13h-5zM865 740.500l10.500 4-1.500 3zM1106.500 880l-10.500-3.500 1.500-3z" />
    <g fontFamily="Liberation Sans, sans-serif" fontSize="15" fontWeight="bold" textAnchor="middle">
      <text transform="translate(825.500 448) skewY(27)">50.00</text>
      <text transform="translate(1019.500 836) skewY(27)">50.00</text>
    </g>

    {/* Extrude direction handle */}
    <path d="m986 604 254-147" stroke="url(#shaft)" strokeWidth="7" strokeLinecap="round" />
    <circle cx="986" cy="604" r="2.200" fill="#777" stroke="#eee" />
    <path d="m1236 447 18 3-9 14z" fill="#b5b5b5" />
    <ellipse cx="1241.500" cy="455.500" rx="4.500" ry="9" transform="rotate(-28 1241.500 455.500)" fill="#5e5e5e" stroke="#888" />
    <ellipse cx="1241" cy="455.500" rx="2" ry="3.500" transform="rotate(-28 1241 455.500)" fill="none" stroke="#ccc" />

    {/* Sketch origin */}
    <path d="M864.500 673V649M864.500 673l8 5" stroke="#ff0000" strokeWidth="1.800" />
    <path d="m864.500 640 3.500 9.500h-7zM879 682.500l-9-1.500 3-5.500z" fill="#ff0000" />

    <Relation x={980} y={473} kind="h" />
    <Relation x={980} y={752} kind="h" />
    <Relation x={873} y={528} kind="v" />
    <Relation x={1114} y={668} kind="v" />
    <Relation x={859} y={682} kind="fixed" />
  </svg>
);

const Triad = () => (
  <Svg w={76} h={70}>
    <path d="M39 44V24" stroke="#1e6b1e" strokeWidth="5" />
    <path d="m39 13 6 10-6 3.500L33 23z" fill="#2e8b2e" stroke="#14501a" />
    <path d="m39 14 1.500 10-3 1z" fill="#7bdc7b" />
    <path d="m39 44 18 10" stroke="#c01818" strokeWidth="4.500" />
    <path d="m66 60-12-1 4-8z" fill="#e02a2a" stroke="#8a1010" />
    <path d="M39 44 22 53" stroke="#1a1ac0" strokeWidth="4.500" />
    <path d="m12 60 12-1-4-8z" fill="#2c2ce8" stroke="#10108a" />
    <g fontFamily="Liberation Sans, sans-serif" fontSize="13" textAnchor="middle">
      <text x="39" y="12" fill="#008000">Y</text>
      <text x="69" y="66" fill="#ff0000">X</text>
      <text x="8" y="66" fill="#0000ff">Z</text>
    </g>
  </Svg>
);

const taskPane: { label: string; icon: ReactNode }[] = [
  {
    label: "SOLIDWORKS Resources",
    icon: (
      <Svg w={19} h={19}>
        <path d="M3.500 9v9h12V9" fill="#fff" stroke="#333" strokeWidth="1.300" />
        <path d="M8 18v-6h4v6" stroke="#333" />
        <path d="M1 10.500 9.500 2l8.500 8.500" stroke="#1f6a92" strokeWidth="3" />
      </Svg>
    ),
  },
  {
    label: "Design Library",
    icon: (
      <Svg w={19} h={19}>
        <path d="m2 4 3-1.500L9 2l3-1 5 2v11l-4 4-3-1-3 1-5-3zM2 4l4 2v12M6 6l3-2M9 2.500 11 5v13M11 5l2-2M14 4l1 1v12M6 3l3 3v11M15 5l2-2" fill="#f2f2f2" stroke="#3a3a3a" />
      </Svg>
    ),
  },
  {
    label: "File Explorer",
    icon: (
      <Svg w={21} h={18}>
        <path d="M1 17V1h6l1.500 3H17v3" fill="#e0e0e0" stroke="#3a3a3a" strokeWidth="1.200" />
        <path d="M1 17 6 7h14l-5 10z" fill="#f7f7f7" stroke="#3a3a3a" strokeWidth="1.200" />
      </Svg>
    ),
  },
  {
    label: "View Palette",
    icon: (
      <Svg w={19} h={17}>
        <rect x="1" y="1" width="17" height="15" rx="1" fill="#fff" stroke="#222" strokeWidth="1.500" />
        <path d="M3.500 3.500h8v3h-8zM13.500 3.500h2.500v3h-2.500zM6 8.500h3v2h2.500v3h-8v-3H6z" fill="#f4c020" stroke="#8a6508" />
        <path d="M14 9h4v7h-4z" fill="#999" stroke="#333" />
      </Svg>
    ),
  },
  { label: "Appearances", icon: <AppearanceBall /> },
  { label: "Custom Properties", icon: <PropertyIcon /> },
  {
    label: "Forum",
    icon: (
      <Svg w={19} h={17}>
        <path d="M1 1h12v8H7l-4 4V9H1z" fill="#3f8db3" stroke="#1b536f" />
        <path d="M7 6h11v7h-1.500v3.500L13 13H7z" fill="#f4f4f4" stroke="#333" />
      </Svg>
    ),
  },
];

const GraphicsArea = () => (
  <main className="relative min-w-0 flex-1 bg-white">
    <ModelPreview />

    {/* Flyout tree */}
    <button className="absolute top-1 left-[6px] flex items-center text-[15px] leading-6 text-black [font-family:Lato,sans-serif]">
      <Svg w={5} h={8}>
        <path d="M0 0v8l5-4z" fill="#000" />
      </Svg>
      <span className="ml-[13px]"><PartIcon /></span>
      <span className="ml-1 pt-[3px] whitespace-pre">thomas model  (Def...</span>
    </button>

    {/* Panel splitter */}
    <button
      aria-label="Collapse panel"
      className="absolute top-[376px] -left-px flex h-[49px] w-3 items-center border border-l-0 border-[#858585] bg-[#f7f7f7] pl-[2px]"
    >
      <Svg w={6} h={6}>
        <circle cx="3" cy="3" r="2.500" fill="#d8d8d8" stroke="#999" />
      </Svg>
    </button>

    {/* Confirmation corner */}
    <div className="absolute top-[8px] right-[39px] h-[54px] w-[70px]">
      <button aria-label="Accept sketch" className="block">
        <Svg w={30} h={23}>
          <path d="m1 11 5-5 6 6L24 0l6 5-18 18z" fill="#d8ecd4" />
        </Svg>
      </button>
      <button aria-label="Discard sketch" className="mt-[6px] ml-auto block">
        <Svg w={25} h={25}>
          <path d="m5 5 15 15M20 5 5 20" stroke="#eec4c4" strokeWidth="8" strokeLinecap="round" />
          <path d="m5 5 15 15M20 5 5 20" stroke="#f6d8d6" strokeWidth="6" strokeLinecap="round" />
        </Svg>
      </button>
    </div>

    {/* Task pane */}
    <div className="absolute top-[55px] right-0 flex w-8 flex-col border-t border-l border-[#858585]">
      {taskPane.map((item, i) => (
        <button
          key={item.label}
          aria-label={item.label}
          className={`flex h-[30px] items-center justify-center border-b border-[#858585] ${
            i === 0 ? "bg-[#f7f7f7]" : "bg-[#d4d4d4]"
          }`}
        >
          {item.icon}
        </button>
      ))}
    </div>

    <div className="absolute bottom-0 left-3 text-[#1a1a1a]">
      <Triad />
      <p className="mt-[18px] text-[18px] leading-6 font-bold [font-family:Lato,sans-serif]">*Isometric</p>
    </div>
  </main>
);

/* ---------- Bottom bars ---------- */

const sheetNav = [
  { label: "First", d: "M3 4v9M12 4v9L6 8.500z" },
  { label: "Previous", d: "M11 4v9L5 8.500z" },
  { label: "Next", d: "M6 4v9l6-4.500z" },
  { label: "Last", d: "M13 4v9M5 4v9l6-4.500z" },
];

const SheetTabs = () => (
  <div className="flex h-[21px] shrink-0 border-y border-[#858585] bg-[#f7f7f7]">
    <div className="ml-[27px] flex w-[81px] bg-[#a5a8be]">
      {sheetNav.map((nav) => (
        <button key={nav.label} aria-label={nav.label} className="flex w-5 items-center justify-center border border-[#8a8ca3]">
          <Svg w={17} h={17}>
            <path d={nav.d} fill="#7d8098" stroke="#7d8098" strokeWidth="1.200" />
          </Svg>
        </button>
      ))}
    </div>
    <div role="tablist" className="flex text-[15px] leading-[19px] text-[#1e1e1e]">
      <button role="tab" aria-selected="true" className="w-[76px] border-r border-[#858585] pl-1 font-bold text-black">Model</button>
      <button role="tab" aria-selected="false" className="w-[89px] border-r border-[#858585] bg-[#d4d4d4]">3D Views</button>
      <button role="tab" aria-selected="false" className="w-[144px] border-r border-[#858585] bg-[#d4d4d4] pr-3">Motion Study 1</button>
    </div>
  </div>
);

const StatusBar = () => (
  <footer className="flex h-[18px] shrink-0 items-start bg-[#e5e5e5] pr-[2px] pl-px text-[14px] leading-6 whitespace-nowrap text-[#1e1e1e]">
    <span>SOLIDWORKS Premium 2020 SP0.0</span>
    <span className="ml-auto w-[95px]">-80.36mm</span>
    <span className="w-[87px]">-91.93mm</span>
    <span className="w-[56px]">0mm</span>
    <span className="w-[105px]">Fully Defined</span>
    <span className="w-[130px]">Editing Sketch1</span>
    <span className="w-[97px] pt-1">
      <Svg w={16} h={14}>
        <path d="M1 10 5.500 1 10 10z" fill="#f9c22e" stroke="#7a5a00" />
        <path d="M5.500 4v3" stroke="#000" />
        <path d="M8 10c4 0 6-2 6-7M11 5l3-3 2 3" stroke="#222" strokeWidth="1.500" />
        <path d="M1 12h14" stroke="#1f5f86" strokeWidth="3" strokeDasharray="2 1" />
      </Svg>
    </span>
    <span className="w-[69px] text-[#a8a8a8]">MMGS</span>
    <span className="w-[32px] pt-[10px]">
      <Svg w={6} h={4}>
        <path d="M0 4h6L3 0z" fill="#888" />
      </Svg>
    </span>
    <span className="pt-1">
      <Svg w={17} h={16}>
        <path d="m1 5 7-4 8 7-4 7z" fill="#eee" stroke="#555" />
        <circle cx="5" cy="5" r="1.500" stroke="#333" />
        <path d="m8 9 4-3M10 12l4-3" stroke="#333" />
      </Svg>
    </span>
  </footer>
);

export default function App() {
  return (
    <div className="flex h-screen flex-col overflow-hidden [font-family:'Open_Sans','Noto_Sans',sans-serif]">
      <TitleBar />
      <Ribbon />
      <CommandBar />
      <div className="flex min-h-0 flex-1">
        <PropertyManager />
        <GraphicsArea />
      </div>
      <SheetTabs />
      <StatusBar />
    </div>
  );
}
